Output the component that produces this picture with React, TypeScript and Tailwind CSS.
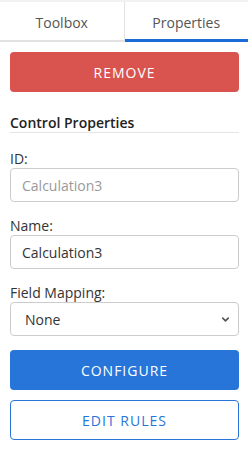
import { ChevronDown } from "lucide-react";

const label = "block text-[14px] leading-[19px] text-[#333]";
const field =
  "block w-full h-[34px] rounded-[4px] border border-[#cccccc] bg-white px-[11px] text-[14px] text-[#333] outline-none";

export default function App() {
  return (
    <div className="w-[248px] h-[459px] bg-white font-['Open_Sans',sans-serif]">
      <div className="h-[2px] bg-[#f2f2f2]" />
      <div className="flex h-[40px]">
        <button className="flex-1 border-r border-b-2 border-[#e2e2e2] pt-[3px] text-[14px] text-[#555]">
          Toolbox
        </button>
        <button className="flex-1 border-b-[3px] border-[#1a6dd8] pt-[4px] text-[14px] text-[#555]">
          Properties
        </button>
      </div>

      <div className="pl-[10px] pr-[9px]">
        <button className="mt-[10px] h-[40px] w-full rounded-[4px] bg-[#d9534f] text-[14px] tracking-[1px] text-white">
          REMOVE
        </button>

        <h3 className="mt-[21px] border-b border-[#e5e5e5] text-[14px] font-semibold leading-[19px] text-[#222]">
          Control Properties
        </h3>

        <label className={`${label} mt-[16px]`}>ID:</label>
        <input className={`${field} placeholder:text-[#999]`} placeholder="Calculation3" disabled />

        <label className={`${label} mt-[14px]`}>Name:</label>
        <input className={field} defaultValue="Calculation3" />

        <label className={`${label} mt-[14px]`}>Field Mapping:</label>
        <div className="relative">
          <select className={`${field} appearance-none pl-[14px]`}>
            <option>None</option>
          </select>
          <ChevronDown
            size={11}
            strokeWidth={3.5}
            className="pointer-events-none absolute right-[8px] top-[12px] text-[#555]"
          />
        </div>

        <button className="mt-[14px] h-[40px] w-full rounded-[4px] bg-[#2775d8] text-[14px] tracking-[1px] text-white">
          CONFIGURE
        </button>
        <button className="mt-[10px] h-[40px] w-full rounded-[4px] border border-[#2775d8] bg-white text-[14px] tracking-[1px] text-[#2775d8]">
          EDIT RULES
        </button>
      </div>
    </div>
  );
}
